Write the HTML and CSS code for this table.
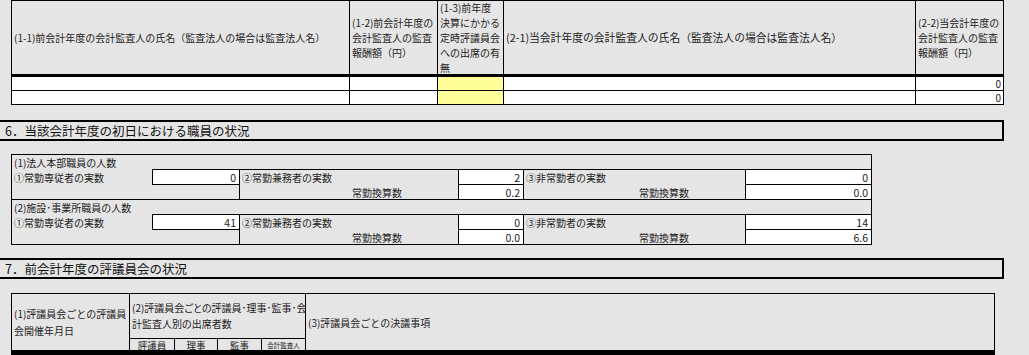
FILE: index.html
```html
<!DOCTYPE html>
<html lang="ja">
<head>
  <meta charset="UTF-8" />
  <meta name="viewport" content="width=device-width, initial-scale=1.0" />
  <title>現況報告書</title>
  <link rel="stylesheet" href="styles.css">
</head>
<body>

  <div class="audit">
    <div class="cell head">(1-1)前会計年度の会計監査人の氏名（監査法人の場合は監査法人名）</div>
    <div class="cell head">(1-2)前会計年度の<br>会計監査人の監査<br>報酬額（円）</div>
    <div class="cell head">(1-3)前年度<br>決算にかかる<br>定時評議員会<br>への出席の有<br>無</div>
    <div class="cell head wide">(2-1)当会計年度の会計監査人の氏名（監査法人の場合は監査法人名）</div>
    <div class="cell head">(2-2)当会計年度の<br>会計監査人の監査<br>報酬額（円）</div>

    <div class="cell"></div>
    <div class="cell"></div>
    <div class="cell yellow"></div>
    <div class="cell"></div>
    <div class="cell num">0</div>

    <div class="cell"></div>
    <div class="cell"></div>
    <div class="cell yellow"></div>
    <div class="cell"></div>
    <div class="cell num">0</div>
  </div>

  <div class="section-title">6．当該会計年度の初日における職員の状況</div>

  <div class="staff">
    <div class="staff-group">
      <div class="group-title">(1)法人本部職員の人数</div>
      <div class="lead">①常勤専従者の実数</div>
      <div class="value first">0</div>
      <div class="label top">②常勤兼務者の実数</div>
      <div class="value top">2</div>
      <div class="label top">③非常勤者の実数</div>
      <div class="value top last">0</div>

      <div class="lead"></div>
      <div class="blank"></div>
      <div class="label sub">常勤換算数</div>
      <div class="value">0.2</div>
      <div class="label sub">常勤換算数</div>
      <div class="value last">0.0</div>
    </div>

    <div class="staff-group">
      <div class="group-title">(2)施設･事業所職員の人数</div>
      <div class="lead">①常勤専従者の実数</div>
      <div class="value first">41</div>
      <div class="label top">②常勤兼務者の実数</div>
      <div class="value top">0</div>
      <div class="label top">③非常勤者の実数</div>
      <div class="value top last">14</div>

      <div class="lead"></div>
      <div class="blank"></div>
      <div class="label sub">常勤換算数</div>
      <div class="value">0.0</div>
      <div class="label sub">常勤換算数</div>
      <div class="value last">6.6</div>
    </div>
  </div>

  <div class="section-title">7．前会計年度の評議員会の状況</div>

  <div class="council">
    <div class="council-date">(1)評議員会ごとの評議員<br>会開催年月日</div>
    <div class="council-attend">(2)評議員会ごとの評議員･理事･監事･会<br>計監査人別の出席者数</div>
    <div class="council-items">(3)評議員会ごとの決議事項</div>
    <div class="sub-head">評議員</div>
    <div class="sub-head">理事</div>
    <div class="sub-head">監事</div>
    <div class="sub-head tiny">会計監査人</div>
  </div>

</body>
</html>
```

FILE: styles.css
```css
* {
  box-sizing: border-box;
}

html {
  overflow: hidden;
}

body {
  margin: 0;
  padding: 0;
  background: #e5e5e5;
  color: #222;
  font-family: "Noto Sans CJK JP", "Noto Sans", sans-serif;
  font-size: 10px;
}

/* 会計監査人の表 */
.audit {
  display: grid;
  grid-template-columns: 338px 88px 66px 412px 88px;
  grid-template-rows: 76px 14px 14px;
  width: 993px;
  margin-left: 11px;
  border-left: 1px solid #000;
  border-top: 1px solid #000;
}

.audit .cell {
  background: #fff;
  border-right: 1px solid #000;
  border-bottom: 1px solid #000;
}

.audit .head {
  background: transparent;
  border-bottom: 3px solid #000;
  display: flex;
  align-items: center;
  padding-left: 2px;
  line-height: 15px;
  white-space: nowrap;
}

.audit .head.wide {
  font-size: 10.8px;
}

.audit .yellow {
  background: #ffff99;
}

.audit .num {
  text-align: right;
  padding-right: 2px;
  line-height: 13px;
}

/* 見出し */
.section-title {
  width: 1004px;
  height: 21px;
  margin-top: 15px;
  padding-left: 5px;
  border: 2px solid #000;
  border-left: none;
  font-size: 12.5px;
  line-height: 17px;
  color: #111;
}

/* 職員の状況 */
.staff {
  width: 861px;
  margin: 13px 0 0 11px;
  border: 1px solid #000;
}

.staff-group {
  display: grid;
  grid-template-columns: 140px 88px 219px 65px 222px 125px;
  grid-template-rows: 14px 16px 14px;
}

.staff-group + .staff-group {
  border-top: 1px solid #000;
}

.staff-group > div {
  display: flex;
  align-items: center;
  white-space: nowrap;
}

.group-title {
  grid-column: 1 / -1;
  padding-left: 2px;
}

.lead {
  padding-left: 2px;
}

.blank {
  border-right: 1px solid #000;
}

.label {
  padding-left: 2px;
  border-right: 1px solid #000;
}

.label.top {
  border-top: 1px solid #000;
}

.label.sub {
  justify-content: flex-end;
  padding-right: 56px;
}

.value {
  justify-content: flex-end;
  padding-right: 3px;
  background: #fff;
  border-right: 1px solid #000;
  font-size: 10.5px;
}

.value.top {
  border-top: 1px solid #000;
  border-bottom: 1px solid #000;
}

.value.first {
  border: 1px solid #000;
}

.value.last {
  border-right: none;
}

/* 評議員会の状況 */
.section-title + .council {
  margin-top: 14px;
}

.staff + .section-title {
  margin-top: 13px;
}

.council {
  display: grid;
  grid-template-columns: 118px 45px 43px 44px 44px 1fr;
  grid-template-rows: 45px 11px;
  width: 984px;
  margin-left: 11px;
  border: 1px solid #000;
  border-bottom: 5px solid #000;
}

.council > div {
  display: flex;
  align-items: center;
  white-space: nowrap;
}

.council-date {
  grid-row: 1 / 3;
  grid-column: 1;
  padding-left: 2px;
  line-height: 17px;
  border-right: 1px solid #000;
}

.council-attend {
  grid-row: 1;
  grid-column: 2 / 6;
  padding-left: 2px;
  line-height: 16px;
  border-right: 1px solid #000;
  border-bottom: 1px solid #000;
  font-feature-settings: "palt";
}

.council-items {
  grid-row: 1 / 3;
  grid-column: 6;
  padding-left: 2px;
}

.sub-head {
  grid-row: 2;
  justify-content: center;
  font-size: 9.5px;
  line-height: 10px;
  border-right: 1px solid #000;
}

.sub-head.tiny {
  font-size: 6.5px;
}
```
